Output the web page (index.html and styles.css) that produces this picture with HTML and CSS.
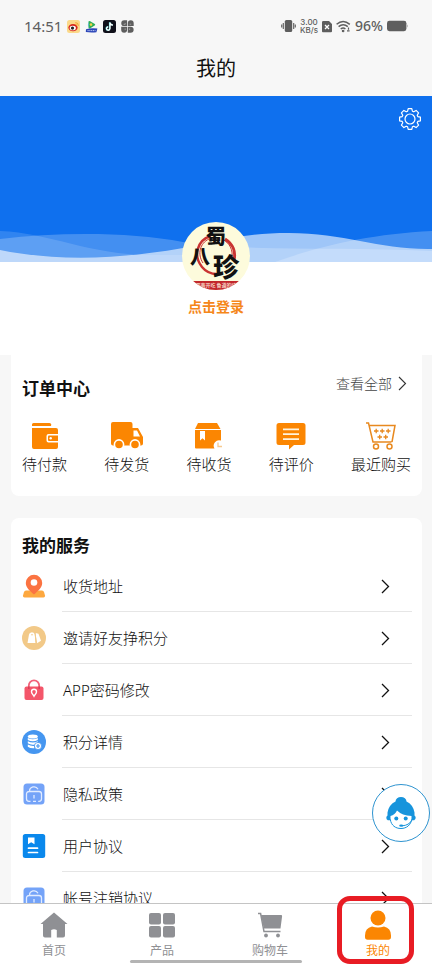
FILE: index.html
```html
<!DOCTYPE html>
<html lang="zh-CN">
<head>
    <meta charset="UTF-8">
    <meta name="viewport" content="width=device-width, initial-scale=1.0">
    <title>我的</title>
    <link rel="stylesheet" href="styles.css">
</head>
<body>
    <header class="top">
        <div class="status-bar">
            <div class="status-left">
                <span class="clock">14:51</span>
                <svg class="app-icon" viewBox="0 0 13 13">
                    <rect width="13" height="13" rx="2.5" fill="#fbd98a"/>
                    <ellipse cx="6" cy="7.6" rx="4.6" ry="3.6" fill="#d8281f"/>
                    <ellipse cx="5.8" cy="8" rx="3.1" ry="2.3" fill="#fff"/>
                    <circle cx="5.5" cy="8.1" r="1.6" fill="#222"/>
                    <path d="M8.3 2.6a3 3 0 0 1 3 3.2M8.3 4.3a1.4 1.4 0 0 1 1.4 1.4" fill="none" stroke="#f09a25" stroke-width=".9"/>
                </svg>
                <svg class="app-icon" viewBox="0 0 13 13">
                    <path d="M3.5 1.5Q4 .6 5.2 1.2L9.8 4Q10.8 4.8 9.6 5.6L5 8.4Q3.5 8.8 3.5 7.6z" fill="#2fae57"/>
                    <path d="M3.5 1.5v6Q2.4 4.5 3.5 1.5z" fill="#2aa7ea"/>
                    <circle cx="6" cy="4.6" r="1.3" fill="#f6d34a"/>
                    <path d="M1 9.2Q6.5 7.6 12.4 8.6L11.4 12.2Q6 12.8.8 12z" fill="#2c45b8"/>
                    <path d="M2.5 10.6h8" stroke="#b9c6f3" stroke-dasharray="1.2 .6"/>
                </svg>
                <svg class="app-icon" viewBox="0 0 13 13">
                    <rect width="13" height="13" rx="2.5" fill="#10101a"/>
                    <path d="M6.6 2.2v6.2a1.7 1.7 0 1 1-1.7-1.7M6.6 2.4q.4 2.3 3 2.5" fill="none" stroke="#4fe3e0" stroke-width="1.4"/>
                    <path d="M7 2.4v6.2a1.7 1.7 0 1 1-1.7-1.7M7 2.6q.4 2.3 3 2.5" fill="none" stroke="#fff" stroke-width="1.3"/>
                </svg>
                <svg class="app-icon" viewBox="0 0 13 13" fill="#5e5e5e">
                    <path d="M3.2.2h2.9v5.9H3.2a2.9 2.9 0 0 1 0-5.9z"/>
                    <path d="M6.8 3.2a2.9 2.9 0 0 1 5.9 0v2.9H6.8z"/>
                    <path d="M.2 6.8h5.9v2.9a2.9 2.9 0 0 1-5.9 0z"/>
                    <path d="M6.8 6.8h2.9a2.9 2.9 0 0 1 0 5.9H6.8z"/>
                    <path d="M4.2 3v1.400H2.600M8.600 4.200h1.600M4.200 8.400v1.600M8.600 8.400v1.600" fill="none" stroke="#f7f7f7" stroke-width=".4"/>
                </svg>
            </div>
            <div class="status-right">
                <svg width="15" height="14" viewBox="0 0 15 14" fill="#5e5e5e">
                    <rect x="3.8" y="1" width="7.4" height="12" rx="1.6"/>
                    <path d="M2.3 4v6M12.7 4v6M.7 5.6v2.8M14.3 5.6v2.8" stroke="#5e5e5e" stroke-width="1.1"/>
                </svg>
                <span class="net-speed">3.00<br>KB/s</span>
                <svg width="10" height="13" viewBox="0 0 10 13">
                    <path d="M1.5 1H7l3 3v7.2a1 1 0 0 1-1 1H1.2a1 1 0 0 1-1.2-1V2.2A1.3 1.3 0 0 1 1.5 1z" fill="#5e5e5e"/>
                    <path d="M3 5l4 4M7 5L3 9" stroke="#fff" stroke-width="1.3"/>
                </svg>
                <svg width="15" height="13" viewBox="0 0 15 13" fill="none" stroke="#5e5e5e" stroke-width="1.5">
                    <path d="M.6 4.3Q7-1.2 13.8 4.3M2.6 6.7Q7.2 2.9 11.8 6.7M4.7 9Q7.2 7.2 9.4 9"/>
                    <circle cx="7.1" cy="11" r=".6"/>
                    <path d="M12.5 7.5v2.3M11 10.8h2.600" stroke-width="1.2"/>
                </svg>
                <span class="percent">96%</span>
                <svg width="21" height="12" viewBox="0 0 21 12" fill="#5e5e5e">
                    <rect y=".8" width="19.4" height="10.4" rx="2.4"/>
                    <path d="M20 4.2q1 1.8 0 3.6z"/>
                </svg>
            </div>
        </div>
        <h1 class="page-title">我的</h1>
    </header>

    <main class="content">
        <section class="profile">
            <div class="banner">
                <button class="settings" type="button" aria-label="设置">
                    <svg width="24" height="24" viewBox="0 0 24 24" fill="none" stroke="#fff" stroke-width="1.2" stroke-linejoin="round">
                        <path d="M9.6 4.2L10.2 1.6H13.8L14.4 4.2L15.8 4.8L18.1 3.4L20.6 5.9L19.2 8.2L19.8 9.6L22.4 10.2V13.8L19.8 14.4L19.2 15.8L20.6 18.1L18.1 20.6L15.8 19.2L14.4 19.8L13.8 22.4H10.2L9.6 19.8L8.2 19.2L5.9 20.6L3.4 18.1L4.8 15.8L4.2 14.4L1.6 13.8V10.2L4.2 9.6L4.8 8.2L3.4 5.9L5.9 3.4L8.2 4.8Z"/>
                        <circle cx="12" cy="12" r="5"/>
                    </svg>
                </button>
                <svg class="waves" viewBox="0 0 432 38" preserveAspectRatio="none" fill="#fff">
                    <path fill-opacity=".14" d="M0 7C50 9 90 31 150 31H215V38H0z"/>
                    <path fill-opacity=".22" d="M0 15C60 8 130 8 183 18C250 28 330 22 432 27V38H0z"/>
                    <path fill-opacity=".22" d="M275 38C320 22 370 10 432 7V38z"/>
                    <path fill-opacity=".6" d="M0 26C50 36 110 37 183 24C230 14 250 9 289 9C345 9 380 26 432 25V38H0z"/>
                </svg>
            </div>
            <svg class="avatar" viewBox="0 0 68 68" role="img" aria-label="蜀八珍">
                <defs>
                    <clipPath id="face"><circle cx="34" cy="34" r="34"/></clipPath>
                </defs>
                <g clip-path="url(#face)">
                    <rect width="68" height="68" fill="#fdfbdc"/>
                    <g fill="none" stroke="#c93432">
                        <path d="M29 14C15 18 11 34 20 45C24 50 30 52 35 52" stroke-width="2.4"/>
                        <path d="M27 17C18 21 15 32 21 41" stroke-width="1"/>
                        <path d="M43 17C51 22 54 30 52 38" stroke-width="3"/>
                        <path d="M40 17C48 21 51 28 50 36" stroke-width="1"/>
                    </g>
                    <rect y="59" width="68" height="9" fill="#c2272c"/>
                    <text class="brush" x="24" y="22" font-size="20">蜀</text>
                    <text class="brush" x="8" y="42" font-size="20">八</text>
                    <text class="brush" x="31" y="55" font-size="26">珍</text>
                    <text class="ribbon" x="34" y="65" text-anchor="middle">蜀南开吃 鲁道的味</text>
                </g>
            </svg>
            <a class="login-link" href="#">点击登录</a>
        </section>

        <section class="card orders">
            <div class="card-head">
                <h2 class="card-title">订单中心</h2>
                <a class="see-all" href="#">查看全部
                    <svg width="9" height="15" viewBox="0 0 9 15"><path d="M1 1l6.5 6.5L1 14" fill="none" stroke="#333" stroke-width="1.1"/></svg>
                </a>
            </div>
            <div class="order-list">
                <a class="order-item" href="#">
                    <svg width="34" height="28" viewBox="0 0 34 28" fill="#fb8602">
                        <path d="M5.5 1H21a2 2 0 0 1 2 3H4V2.5A1.5 1.5 0 0 1 5.5 1z"/>
                        <path d="M4 6h24a2 2 0 0 1 2 2v4H20.5a2 2 0 0 0-2 2v4.5a2 2 0 0 0 2 2H30V25a2 2 0 0 1-2 2H6a2 2 0 0 1-2-2z"/>
                        <path d="M30 13.5v5.500H21a1 1 0 0 1-1-1v-3.500a1 1 0 0 1 1-1z"/>
                        <circle cx="22.7" cy="16.3" r="1.2" fill="#fff"/>
                    </svg>
                    <span>待付款</span>
                </a>
                <a class="order-item" href="#">
                    <svg width="34" height="28" viewBox="0 0 34 28" fill="#fb8602">
                        <path d="M3 0h17.500a2 2 0 0 1 2 2v4H28l5 9v6.500a2 2 0 0 1-2 2H3a2 2 0 0 1-2-2V2a2 2 0 0 1 2-2z"/>
                        <path d="M23.500 8.500h3.500l3 6h-6.500z" fill="#fff"/>
                        <g stroke="#fff" stroke-width="1.6">
                            <circle cx="9" cy="22.500" r="4.600"/>
                            <circle cx="25" cy="22.500" r="4.600"/>
                        </g>
                    </svg>
                    <span>待发货</span>
                </a>
                <a class="order-item" href="#">
                    <svg width="34" height="28" viewBox="0 0 34 28" fill="#fb8602">
                        <path d="M6 1h19l3.500 6H3z"/>
                        <path d="M3 8h26v10.500a5.500 5.500 0 0 0-6.500 8H4a1 1 0 0 1-1-1z"/>
                        <path d="M8 9h5v9.500l-2.500-2.200L8 18.500z" fill="#fff"/>
                        <path d="M26 20.500v4h4" fill="none" stroke="#f6c98f" stroke-width="1.3"/>
                    </svg>
                    <span>待收货</span>
                </a>
                <a class="order-item" href="#">
                    <svg width="34" height="28" viewBox="0 0 34 28">
                        <path d="M5 1h24a2.500 2.500 0 0 1 2.500 2.500v17A2.500 2.500 0 0 1 29 23h-9l-5 4.500V23H5a2.500 2.500 0 0 1-2.500-2.500v-17A2.500 2.500 0 0 1 5 1z" fill="#fb8602"/>
                        <path d="M9 7.300h16M9 12.200h16M9 17.100h16" stroke="#fff3dc" stroke-width="1.7"/>
                    </svg>
                    <span>待评价</span>
                </a>
                <a class="order-item" href="#">
                    <svg width="34" height="28" viewBox="0 0 34 28" fill="none" stroke="#e8891f" stroke-width="1.5">
                        <path d="M2 1h2.500L9 20h18.500M5 3.500h26L28 20"/>
                        <circle cx="12" cy="24.500" r="2.500"/>
                        <circle cx="25.500" cy="24.500" r="2.500"/>
                        <path d="M10 9h4.500M16 9h4.500M22 9h4.500M12.200 6.800v4.400M18.200 6.800v4.400M24.200 6.800v4.400M13.500 15H18M19.500 15H24M15.700 12.800v4.400M21.700 12.800v4.400" stroke-width="1.3"/>
                    </svg>
                    <span>最近购买</span>
                </a>
            </div>
        </section>

        <section class="card services">
            <h2 class="card-title">我的服务</h2>
            <ul class="service-list">
                <li><a class="service" href="#">
                    <svg class="service-icon" viewBox="0 0 24 24">
                        <path d="M4 16.500h16q1.500 0 2 1.500l1 3.500q.3 2-1.500 2h-19q-1.800 0-1.500-2l1-3.500q.5-1.500 2-1.500z" fill="#fda83f"/>
                        <path d="M12 .8a8.200 8.200 0 0 1 8.200 8.200c0 4.500-4.200 8-8.200 11.500C8 17 3.800 13.500 3.800 9A8.200 8.200 0 0 1 12 .8z" fill="#fb7341"/>
                        <circle cx="12" cy="8.500" r="3.300" fill="#fff"/>
                    </svg>
                    <span class="service-name">收货地址</span>
                    <svg class="arrow" viewBox="0 0 9 15"><path d="M1 1l6.500 6.500L1 14"/></svg>
                </a></li>
                <li><a class="service" href="#">
                    <svg class="service-icon" viewBox="0 0 24 24">
                        <circle cx="12" cy="12" r="12" fill="#f2c988"/>
                        <path d="M7 8.500q.3-2 3-2.300 2.700.3 2.800 2.300l.7 8.500H5.500z" fill="#fff"/>
                        <path d="M13.500 7l3 .8 2.500 7-4 2.500z" fill="#fff"/>
                        <path d="M13 7l1.200 9.800" stroke="#f2c988"/>
                        <circle cx="10" cy="8.800" r=".8" fill="#f2c988"/>
                    </svg>
                    <span class="service-name">邀请好友挣积分</span>
                    <svg class="arrow" viewBox="0 0 9 15"><path d="M1 1l6.500 6.500L1 14"/></svg>
                </a></li>
                <li><a class="service" href="#">
                    <svg class="service-icon" viewBox="0 0 24 24">
                        <path d="M6.800 10V7.500a5.200 5.200 0 0 1 10.400 0V10" fill="none" stroke="#f2627a" stroke-width="1.8"/>
                        <rect x="2.500" y="8.500" width="19" height="13.500" rx="2" fill="#f4566a"/>
                        <path d="M6.800 8.500V11M17.200 8.500V11" stroke="#d63f56" stroke-width="1.5"/>
                        <path d="M12 11.300a2.500 2.500 0 0 1 2.500 2.500c0 1.800-1.500 2.500-2.500 4.500-1-2-2.500-2.700-2.500-4.500a2.500 2.500 0 0 1 2.500-2.500z" fill="none" stroke="#fff" stroke-width="1.4"/>
                    </svg>
                    <span class="service-name">APP密码修改</span>
                    <svg class="arrow" viewBox="0 0 9 15"><path d="M1 1l6.500 6.500L1 14"/></svg>
                </a></li>
                <li><a class="service" href="#">
                    <svg class="service-icon" viewBox="0 0 24 24">
                        <circle cx="12" cy="12" r="12" fill="#4596f0"/>
                        <g fill="#fff">
                            <ellipse cx="10.800" cy="6.500" rx="5" ry="2"/>
                            <path d="M5.800 8q5 2.500 10 0v2q-5 2.500-10 0zM5.800 11.300q5 2.500 10 0v1.500q-2 .6-3 1.700-4 .8-7-1.200zM5.800 14.600q3 1.600 6.200 1.300l.3 2.400q-4 .3-6.500-1.500z"/>
                            <circle cx="16" cy="16" r="3.600" stroke="#4596f0" stroke-width=".8"/>
                        </g>
                        <path d="M16 14v4M14 16h4" stroke="#4596f0" stroke-width="1.2"/>
                    </svg>
                    <span class="service-name">积分详情</span>
                    <svg class="arrow" viewBox="0 0 9 15"><path d="M1 1l6.500 6.500L1 14"/></svg>
                </a></li>
                <li><a class="service" href="#">
                    <svg class="service-icon" viewBox="0 0 24 24">
                        <rect x="1.500" y="1.500" width="21" height="21" rx="3.500" fill="#74a3f8"/>
                        <path d="M8.500 19.300H7a2.500 2.500 0 0 1-2.500-2.500V12A2.500 2.500 0 0 1 7 9.500h10a2.500 2.500 0 0 1 2.500 2.500v4.800a2.500 2.500 0 0 1-2.500 2.500h-.8M11 19.300h3M7.500 9.300a4.500 4.500 0 0 1 8.500-2M12 13v3.500" fill="none" stroke="#e2ecff" stroke-width="1.3"/>
                    </svg>
                    <span class="service-name">隐私政策</span>
                    <svg class="arrow" viewBox="0 0 9 15"><path d="M1 1l6.500 6.500L1 14"/></svg>
                </a></li>
                <li><a class="service" href="#">
                    <svg class="service-icon" viewBox="0 0 24 24">
                        <rect x=".8" y="0" width="22.400" height="24" rx="2.500" fill="#0a88ec"/>
                        <path d="M6 3.500h6.500v6.800L9.200 8.200 6 10.300z" fill="#fff"/>
                        <path d="M6.500 14.200h9M6.500 18.500h9" stroke="#fff" stroke-width="1.7" stroke-linecap="round"/>
                    </svg>
                    <span class="service-name">用户协议</span>
                    <svg class="arrow" viewBox="0 0 9 15"><path d="M1 1l6.500 6.500L1 14"/></svg>
                </a></li>
                <li><a class="service" href="#">
                    <svg class="service-icon" viewBox="0 0 24 24">
                        <rect x="1.500" y="1.500" width="21" height="21" rx="3.500" fill="#74a3f8"/>
                        <path d="M8.500 19.300H7a2.500 2.500 0 0 1-2.500-2.500V12A2.500 2.500 0 0 1 7 9.500h10a2.500 2.500 0 0 1 2.500 2.500v4.800a2.500 2.500 0 0 1-2.500 2.500h-.8M11 19.300h3M7.500 9.300a4.500 4.500 0 0 1 8.500-2M12 13v3.500" fill="none" stroke="#e2ecff" stroke-width="1.3"/>
                    </svg>
                    <span class="service-name">帐号注销协议</span>
                    <svg class="arrow" viewBox="0 0 9 15"><path d="M1 1l6.500 6.500L1 14"/></svg>
                </a></li>
            </ul>
        </section>
    </main>

    <button class="support" type="button" aria-label="客服">
        <svg width="32" height="34" viewBox="0 0 32 34">
            <path d="M10.500 5.500a5.500 4.500 0 0 1 11 0q6.500 3 8 11v3q1.200.8 1.200 2.300t-1.500 2.400h-2.500L16 26 5.300 24.200H2.800q-1.500-.8-1.500-2.400t1.200-2.300v-3q1.500-8 8-11z" fill="#1794dc"/>
            <path d="M5.500 20q4.500-1.200 6.500-5.500 5 5 14.500 5.500v2.500c-.5 6-5 10-10.500 10S6 28.500 5.500 22.500z" fill="#fff"/>
            <path d="M5.300 23.500c1 6 5.200 9 10.700 9s9.800-3.500 10.700-9" fill="none" stroke="#1794dc" stroke-width="1"/>
            <circle cx="11.300" cy="22.500" r="2" fill="#1794dc"/>
            <circle cx="20.700" cy="22.500" r="2" fill="#1794dc"/>
            <path d="M27 24q-3 5.500-10 5.800" fill="none" stroke="#1794dc" stroke-width="1"/>
            <ellipse cx="16.200" cy="29.700" rx="2" ry="1.100" fill="#1794dc"/>
        </svg>
    </button>

    <nav class="tabbar">
        <a class="tab" href="#">
            <svg width="28" height="30" viewBox="0 0 28 30" fill="#8f9094">
                <path d="M14 2.500L27.500 14H25v11.500a2 2 0 0 1-2 2h-6.200V20q-2.800-1.500-5.600 0v7.500H5a2 2 0 0 1-2-2V14H.5z"/>
            </svg>
            <span>首页</span>
        </a>
        <a class="tab" href="#">
            <svg width="28" height="30" viewBox="0 0 28 30" fill="#8f9094">
                <rect x="1" y="3" width="12" height="11.500" rx="2"/>
                <rect x="15" y="3" width="12" height="11.500" rx="2"/>
                <rect x="1" y="16" width="12" height="11.500" rx="2"/>
                <rect x="15" y="16" width="12" height="11.500" rx="2"/>
            </svg>
            <span>产品</span>
        </a>
        <a class="tab" href="#">
            <svg width="28" height="30" viewBox="0 0 28 30" fill="#8f9094">
                <path d="M5 5h20q1.300 0 1.100 1.300L24.500 18.500H7.800z"/>
                <path d="M2 3.600h2.600L8 21.600h16.500" fill="none" stroke="#8f9094" stroke-width="1.5"/>
                <circle cx="10" cy="25.500" r="1.900"/>
                <circle cx="22" cy="25.500" r="1.900"/>
            </svg>
            <span>购物车</span>
        </a>
        <a class="tab active" href="#">
            <svg width="28" height="30" viewBox="0 0 28 30" fill="#fb8602">
                <circle cx="14" cy="8" r="7.500"/>
                <path d="M8 16.500q6 2.200 12 0 7 1.500 7 9v1.500q0 2.700-2.700 2.700H3.700Q1 29.700 1 27v-1.500q0-7.500 7-9z"/>
            </svg>
            <span>我的</span>
        </a>
        <span class="tab-mark"></span>
        <span class="home-indicator"></span>
    </nav>
</body>
</html>
```
FILE: styles.css
```css
* {
    box-sizing: border-box;
}

body {
    margin: 0;
    height: 100vh;
    display: flex;
    flex-direction: column;
    position: relative;
    overflow: hidden;
    background: #f7f7f7;
    color: #111;
    font-family: "Noto Sans", "Noto Sans CJK SC", sans-serif;
}

a {
    color: inherit;
    text-decoration: none;
}

button {
    padding: 0;
    border: 0;
    background: none;
    cursor: pointer;
}

svg {
    display: block;
    flex-shrink: 0;
}

h1, h2, ul {
    margin: 0;
    padding: 0;
}

/* status bar and title */
.top {
    flex-shrink: 0;
    padding-bottom: 10px;
}

.status-bar {
    display: flex;
    justify-content: space-between;
    align-items: center;
    height: 52px;
    padding: 0 24px;
    color: #5e5e5e;
}

.status-left, .status-right {
    display: flex;
    align-items: center;
    gap: 5px;
}

.status-right {
    gap: 4px;
}

.clock {
    font-size: 15px;
    line-height: 20px;
}

.app-icon {
    width: 13px;
    height: 13px;
}

.net-speed {
    font-family: Inter, sans-serif;
    font-size: 8px;
    line-height: 8px;
    font-weight: 500;
    text-align: center;
}

.percent {
    font-size: 14px;
    line-height: 20px;
    font-weight: 500;
}

.page-title {
    font-size: 20px;
    line-height: 34px;
    font-weight: 400;
    text-align: center;
}

/* scrolling part */
.content {
    flex: 1;
    min-height: 0;
    overflow-y: auto;
    scrollbar-width: none;
}

.profile {
    display: flex;
    flex-direction: column;
    align-items: center;
    padding-bottom: 38px;
    background: #fff;
}

.banner {
    display: flex;
    flex-direction: column;
    justify-content: space-between;
    width: 100%;
    height: 166px;
    padding-top: 11px;
    background: #0f70ee;
}

.settings {
    align-self: flex-end;
    margin-right: 10px;
}

.waves {
    width: 100%;
    height: 38px;
}

.avatar {
    width: 68px;
    height: 68px;
    margin-top: -40px;
    position: relative;
}

.brush {
    font-family: "Noto Sans CJK SC", sans-serif;
    font-weight: 900;
    fill: #111;
}

.ribbon {
    font-family: "Noto Sans CJK SC", sans-serif;
    font-size: 5px;
    font-weight: 700;
    fill: #f7d9c8;
}

.login-link {
    margin-top: 7px;
    font-size: 14px;
    line-height: 20px;
    font-weight: 700;
    color: #f5871a;
}

.card {
    margin: 0 10px 0 11px;
    background: #fff;
    border-radius: 8px;
}

.card-title {
    font-size: 17px;
    line-height: 26px;
    font-weight: 700;
}

/* orders */
.orders {
    padding: 21px 11px 22px;
    border-radius: 0 0 8px 8px;
}

.card-head {
    display: flex;
    justify-content: space-between;
    align-items: flex-start;
}

.see-all {
    display: flex;
    gap: 6px;
    padding-right: 4px;
    font-size: 14px;
    font-weight: 300;
    line-height: 16px;
    color: #444;
}

.order-list {
    display: flex;
    justify-content: space-between;
    margin-top: 20px;
}

.order-item {
    display: flex;
    flex-direction: column;
    align-items: center;
    gap: 4px;
    font-size: 15px;
    font-weight: 300;
    line-height: 20px;
}

/* services */
.services {
    margin-top: 22px;
    padding: 15px 10px 10px 11px;
}

.service-list {
    margin-top: 1px;
    list-style: none;
}

.service {
    display: flex;
    align-items: center;
    position: relative;
    height: 52px;
    padding-right: 22px;
}

/* the divider starts under the text, not under the icon */
.service::after {
    content: "";
    position: absolute;
    left: 40px;
    right: 0;
    bottom: 0;
    height: 1px;
    background: #e6e6e6;
}

.service-icon {
    width: 24px;
    height: 24px;
}

.service-name {
    flex: 1;
    margin-left: 17px;
    font-size: 15px;
    font-weight: 300;
    line-height: 24px;
}

.arrow {
    width: 9px;
    height: 15px;
    fill: none;
    stroke: #111;
    stroke-width: 1.3;
}

.support {
    display: flex;
    justify-content: center;
    align-items: center;
    position: absolute;
    right: 2px;
    bottom: 122px;
    width: 58px;
    height: 58px;
    border: 1px solid #2f94d0;
    border-radius: 50%;
    background: #fff;
}

/* bottom tabs */
.tabbar {
    flex-shrink: 0;
    display: flex;
    position: relative;
    height: 61px;
    border-top: 1px solid #c4c4c4;
    background: #fff;
}

.tab {
    flex: 1;
    display: flex;
    flex-direction: column;
    align-items: center;
    gap: 4px;
    padding-top: 6px;
    font-size: 12px;
    line-height: 14px;
    color: #8f9094;
}

.tab.active {
    color: #fb8602;
}

.tab-mark {
    position: absolute;
    right: 18px;
    bottom: 0;
    width: 77px;
    height: 68px;
    border: 5px solid #e81c24;
    border-radius: 13px;
    pointer-events: none;
}

.home-indicator {
    position: absolute;
    left: 30%;
    bottom: 1px;
    width: 40%;
    height: 3px;
    border-radius: 2px;
    background: #b4b4b4;
}
```
